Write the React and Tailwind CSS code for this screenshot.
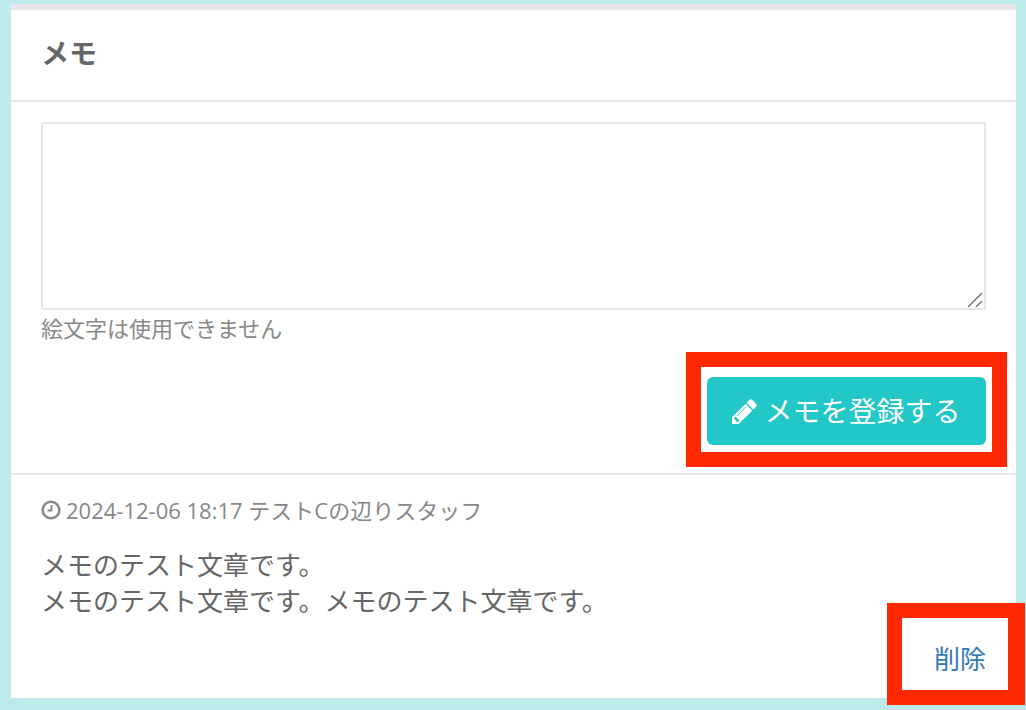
const font = "font-['Open_Sans','Noto_Sans_CJK_JP',sans-serif]";

function PencilIcon() {
  return (
    <svg className="w-[25px] h-[25px] shrink-0" viewBox="128 128 1536 1536" fill="currentColor">
      <path d="M491 1536l91-91-235-235-91 91v107h128v128h107zm523-928q0-22-22-22-10 0-17 7l-542 542q-7 7-7 17 0 22 22 22 10 0 17-7l542-542q7-7 7-17zm-54-192l416 416-832 832h-416v-416zm683 96q0 53-37 90l-166 166-416-416 166-165q36-38 90-38 53 0 91 38l235 234q37 39 37 91z" />
    </svg>
  );
}

function ClockIcon() {
  return (
    <svg className="w-[20px] h-[20px] text-[#888] shrink-0" viewBox="0 0 20 20" fill="none" stroke="currentColor">
      <circle cx="10" cy="10" r="8.3" strokeWidth="2.6" />
      <path d="M10.5 5v5.5H6.5" strokeWidth="1.9" />
    </svg>
  );
}

export default function App() {
  return (
    <div className={`relative w-[1026px] h-[710px] overflow-hidden bg-[#bdeaea] pt-1 pl-[11px] pr-[10px] pb-3 ${font}`}>
      <div className="h-full flex flex-col bg-white">
        <div className="h-[6px] bg-[#e7e7e9]" />
        <div className="h-[92px] flex items-center pl-[30px] pb-[4px] border-b-2 border-[#e8e8e8]">
          <h2 className="text-[28px] font-bold text-[#666]">メモ</h2>
        </div>

        <div className="pt-5 pl-[30px] pr-[30px] h-[373px] border-b-2 border-[#e8e8e8]">
          <div className="relative w-[945px] h-[188px]">
            <textarea className="block w-full h-full resize-none border-2 border-[#e6e6e6] bg-white" />
            <svg className="absolute right-[3px] bottom-[3px] w-[16px] h-[15px] text-[#666]" viewBox="0 0 16 15" fill="none" stroke="currentColor" strokeWidth="1.3">
              <path d="M1 15 15 1M9 15l6-6" />
            </svg>
          </div>
          <p className="mt-[3px] text-[22px] leading-[30px] text-[#888]">絵文字は使用できません</p>
          <div className="flex justify-end mt-[34px]">
            <button className="w-[279px] h-[68px] flex items-center justify-center gap-[7px] rounded-[6px] bg-[#22c7c7] text-white text-[28px]">
              <PencilIcon />
              メモを登録する
            </button>
          </div>
        </div>

        <div className="px-[30px] pt-[18px] flex-1 flex flex-col">
          <div className="flex items-center gap-[5px] text-[22px] leading-[34px] text-[#888]">
            <ClockIcon />
            <span>2024-12-06 18:17 テストCの辺りスタッフ</span>
          </div>
          <p className="mt-[20px] text-[26px] leading-[36px] text-[#666]">
            メモのテスト文章です。<br />
            メモのテスト文章です。メモのテスト文章です。
          </p>
          <div className="flex justify-end mt-[22px]">
            <a className="text-[26px] leading-[37px] text-[#337ab7]">削除</a>
          </div>
        </div>
      </div>

      {/* annotation frames */}
      <div className="absolute left-[686px] top-[352px] w-[321px] h-[115px] border-[15px] border-[#ff2800]" />
      <div className="absolute left-[887px] top-[603px] w-[138px] h-[102px] border-[15px] border-r-[17px] border-[#ff2800]" />
    </div>
  );
}
